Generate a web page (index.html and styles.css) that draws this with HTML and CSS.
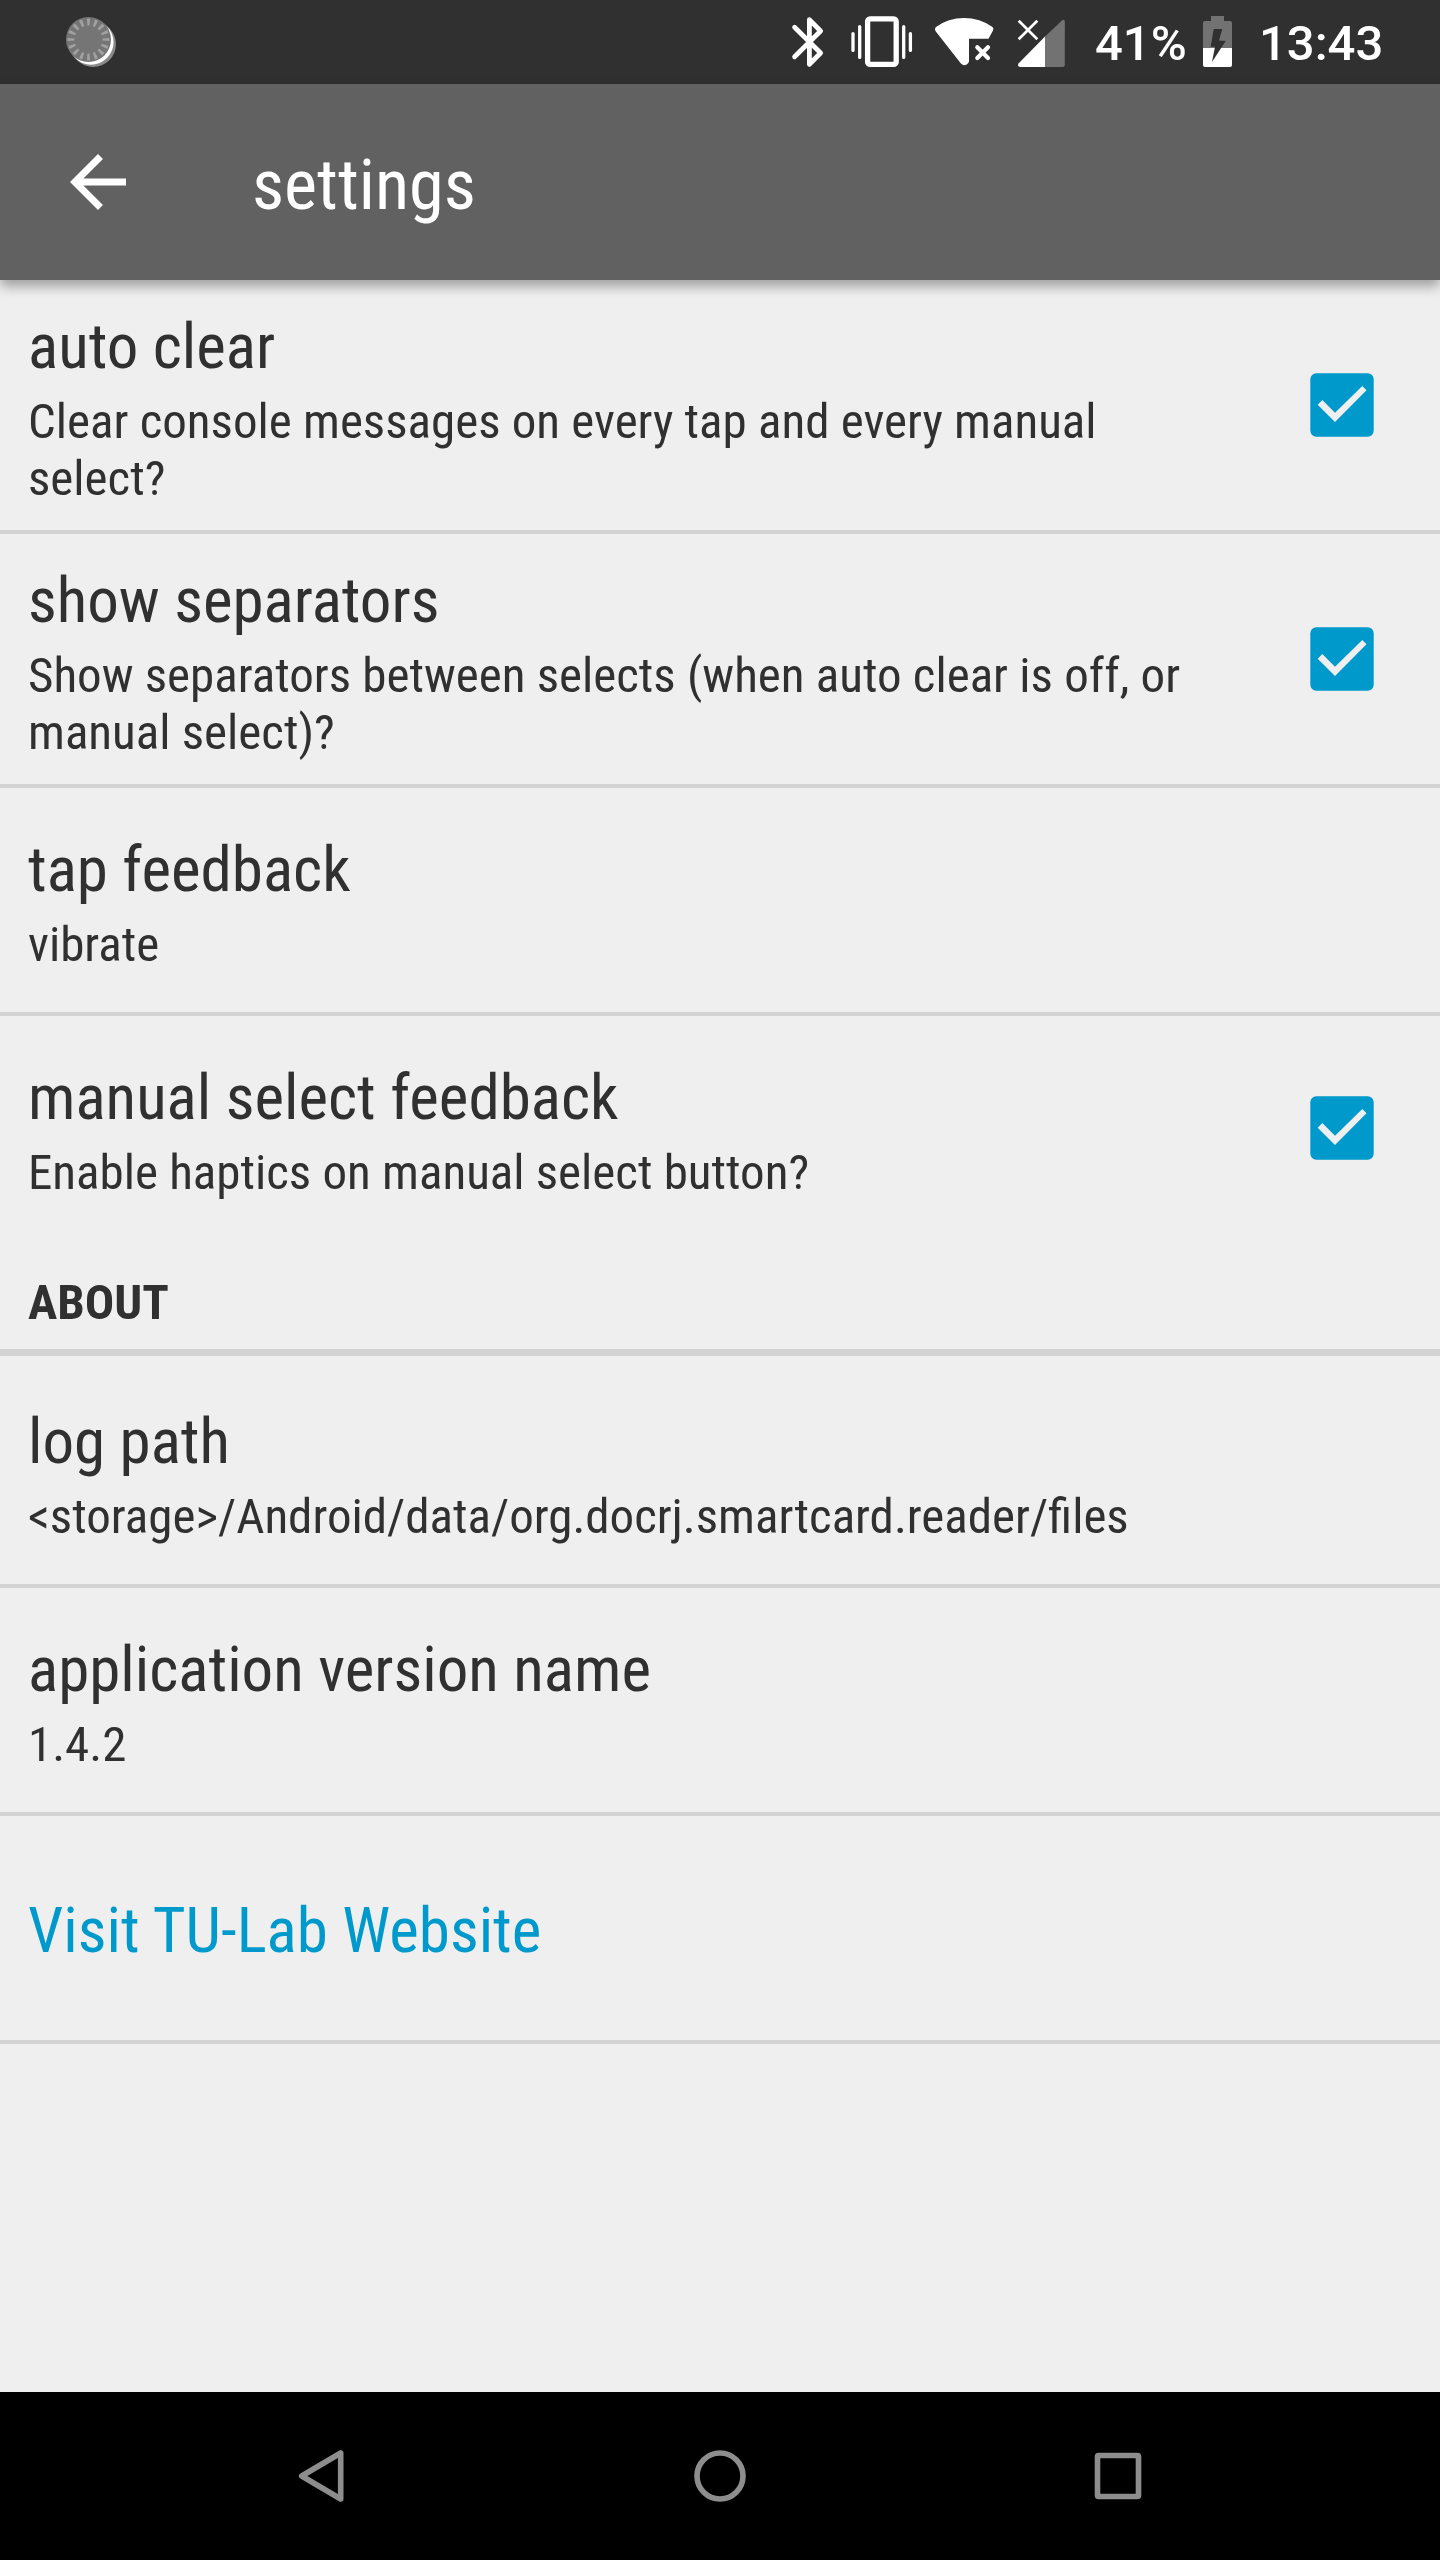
FILE: index.html
```html
<!DOCTYPE html>
<html lang="en">
<head>
<meta charset="utf-8">
<title>settings</title>
<link rel="stylesheet" href="styles.css">
</head>
<body>
<svg class="defs" width="0" height="0" aria-hidden="true">
  <symbol id="checkbox" viewBox="0 0 64 64">
    <rect x="0.3" y="0.3" width="63.4" height="63.4" rx="6" fill="#0099cc"/>
    <path d="M7.7 31.7 12.3 27 25 39.7 52.3 13 56.5 17.2 25 49z" fill="#efefef"/>
  </symbol>
</svg>

<div class="status-bar">
  <svg class="notification" viewBox="64 0 54 84" width="54" height="84">
    <circle cx="93.2" cy="44.2" r="22.7" fill="#8a8a8a"/>
    <circle cx="91" cy="42.2" r="22.5" fill="#fff"/>
    <circle cx="88.5" cy="39.5" r="22.5" fill="#757575"/>
    <circle cx="88.5" cy="39.5" r="17.5" fill="none" stroke="#a0a0a0" stroke-width="7" pathLength="160" stroke-dasharray="4 6" stroke-dashoffset="2"/>
  </svg>
  <div class="status-icons">
    <svg viewBox="786 0 44 84" width="44" height="84" fill="none" stroke="#fff" stroke-width="4.8" stroke-linejoin="round" stroke-linecap="round">
      <path d="M794.6 27.3 820.6 53 809.4 64.3V19.7L820.6 31 794.6 56.7"/>
    </svg>
    <svg viewBox="842 0 80 84" width="80" height="84" fill="none" stroke="#fff" stroke-linecap="round">
      <rect x="867.6" y="18.8" width="28.6" height="45.6" rx="2.5" stroke-width="5.3"/>
      <path stroke-width="3.3" d="M859.7 26.6V57.4M853 33.6V50.4M903.7 26.6V57.4M910.4 33.6V50.4"/>
    </svg>
    <svg viewBox="928 0 72 84" width="72" height="84">
      <path fill="#fff" d="M936 27Q948 18 964 18T992.500 27Q994.200 28.800 993 30.500L988.500 38.700H969V61.500Q967.500 65.300 964 65.300 962 65 960.500 63L936 31.800Q934 29 936 27z"/>
      <path d="M977.300 47.300 988 58M988 47.300 977.300 58" stroke="#fff" stroke-width="4.200" stroke-linecap="round"/>
    </svg>
    <svg viewBox="1012 0 60 84" width="60" height="84">
      <path fill="#727272" d="M1045 36.500 1062 20.500Q1064.800 18.800 1064.800 21.500V65Q1064.800 67 1063 67H1045z"/>
      <path fill="#fff" d="M1045 36.500V67H1020Q1017 66.500 1018.500 63.500z"/>
      <path d="M1018.700 20.700 1037.300 39.300M1037.300 20.700 1018.700 39.300" stroke="#fff" stroke-width="2.700"/>
    </svg>
    <span class="battery-level">41%</span>
    <svg class="battery" viewBox="1198 0 40 84" width="40" height="84">
      <path fill="#727272" d="M1211 16H1224V21H1230Q1232 21 1232 23V48H1203V23Q1203 21 1205 21H1211z"/>
      <path fill="#fff" d="M1203 48H1232V65Q1232 67 1230 67H1205Q1203 67 1203 65z"/>
      <path fill="#303030" d="M1213.700 29H1222.300L1219 40.500 1225.700 41 1212 62 1215 46.700H1210.700z"/>
    </svg>
    <span class="clock">13:43</span>
  </div>
</div>

<header class="app-bar">
  <svg class="back" viewBox="0 0 24 24" width="84" height="84" fill="#fff"><path d="M20 11H7.830l5.590-5.590L12 4l-8 8 8 8 1.410-1.410L7.830 13H20z"/></svg>
  <h1>settings</h1>
</header>

<main>
  <section class="row two-line">
    <div class="label"><h2>auto clear</h2><p>Clear console messages on every tap and every manual select?</p></div>
    <svg class="check"><use href="#checkbox"/></svg>
  </section>
  <section class="row two-line">
    <div class="label"><h2>show separators</h2><p>Show separators between selects (when auto clear is off, or manual select)?</p></div>
    <svg class="check"><use href="#checkbox"/></svg>
  </section>
  <section class="row">
    <div class="label"><h2>tap feedback</h2><p>vibrate</p></div>
  </section>
  <section class="row last">
    <div class="label"><h2>manual select feedback</h2><p>Enable haptics on manual select button?</p></div>
    <svg class="check"><use href="#checkbox"/></svg>
  </section>
  <h3 class="category">ABOUT</h3>
  <section class="row">
    <div class="label"><h2>log path</h2><p>&lt;storage&gt;/Android/data/org.docrj.smartcard.reader/files</p></div>
  </section>
  <section class="row">
    <div class="label"><h2>application version name</h2><p>1.4.2</p></div>
  </section>
  <section class="row link">
    <h2>Visit TU-Lab Website</h2>
  </section>
</main>

<nav class="nav-bar">
  <svg viewBox="292 2448 56 56" width="56" height="56"><path d="M340.700 2453V2499L301.700 2476z"/></svg>
  <svg viewBox="692 2448 56 56" width="56" height="56"><circle cx="720" cy="2476" r="23"/></svg>
  <svg viewBox="1092 2448 56 56" width="56" height="56"><rect x="1097.500" y="2455.500" width="41" height="41" rx="1"/></svg>
</nav>
</body>
</html>
```
FILE: styles.css
```css
* { box-sizing: border-box; margin: 0; padding: 0; }

body {
  width: 1440px;
  height: 2560px;
  display: flex;
  flex-direction: column;
  overflow: hidden;
  background: #efefef;
  color: #303030;
  font-family: "Roboto Condensed", Roboto, sans-serif;
  font-size: 49px;
  line-height: 57px;
}

svg { display: block; flex: none; }
.defs { position: absolute; }

.status-bar {
  display: flex;
  justify-content: space-between;
  height: 84px;
  padding: 0 56px 0 64px;
  background: #303030;
  color: #fff;
  font-family: Roboto, sans-serif;
  font-weight: 500;
  line-height: 88px;
}

.status-icons { display: flex; width: 598px; }
.status-icons svg + svg { margin-left: 12px; }
.status-icons svg:nth-child(3) { margin-left: 6px; }
.battery-level { width: 104px; margin-left: 23px; }
.battery { margin-right: 21px; }
.status-icons .battery { margin-left: -1px; }

.app-bar {
  display: flex;
  align-items: center;
  height: 196px;
  padding-left: 56px;
  background: #616161;
  color: #fff;
  box-shadow: 0 6px 12px rgba(0, 0, 0, 0.35);
}

.app-bar h1 {
  margin: 6px 0 0 112px;
  font-size: 70.4px;
  font-weight: 400;
  line-height: 84px;
}

main { flex: 1; }

.row {
  display: flex;
  align-items: center;
  justify-content: space-between;
  height: 228px;
  padding: 0 66px 0 28px;
  border-bottom: 4px solid #d3d3d3;
}

.two-line { height: 254px; }
.last { height: 224px; border-bottom: 0; }

.label { width: 1210px; padding-top: 1px; }

h2 {
  font-size: 63px;
  font-weight: 400;
  line-height: 84px;
}

.label p { margin-top: 4px; }

.check { width: 64px; height: 64px; }

.category {
  height: 116px;
  margin-bottom: 4px;
  padding: 34px 28px 0;
  border-bottom: 7px solid #d3d3d3;
  font-size: 49px;
  font-weight: 700;
}

.link { color: #0099cc; }
.link h2 { padding-top: 6px; }

.nav-bar {
  display: flex;
  align-items: center;
  justify-content: center;
  gap: 344px;
  height: 168px;
  background: #000;
}

.nav-bar svg {
  fill: none;
  stroke: #8d8d8d;
  stroke-width: 5.6;
  stroke-linejoin: round;
}
```
